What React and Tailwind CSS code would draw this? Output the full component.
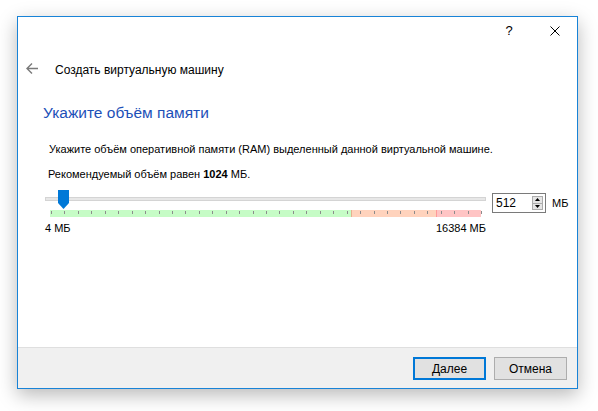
const font = { fontFamily: '"Liberation Sans", Arial, sans-serif' };

function Ticks() {
  const ticks = [];
  for (let i = 0; i <= 32; i++) {
    ticks.push(
      <div
        key={i}
        className="absolute top-[1px] h-[3px] w-px bg-[#8c8c8c]"
        style={{ left: `${Math.round(1 + i * 13.44)}px` }}
      />
    );
  }
  return ticks;
}

function Slider() {
  return (
    <div className="relative w-[441px] h-[27px]">
      <div className="mt-[7px] h-[4px] w-full bg-[#e7e7e7] border border-[#d4d4d4]" />
      <div className="relative mt-[9px] ml-[5px] flex h-[7px] w-[431px]">
        <div className="h-full w-[301px] bg-[#c6fcc6]" />
        <div className="h-full w-px bg-[#e6b090]" />
        <div className="h-full w-[84px] bg-[#ffd3bd]" />
        <div className="h-full w-px bg-[#ff9a9a]" />
        <div className="h-full flex-1 bg-[#ffc4c4]" />
        <Ticks />
      </div>
      <svg className="absolute left-[13px] top-0" width="11" height="19" viewBox="0 0 11 19">
        <path d="M0 0H11V13L5.5 19L0 13Z" fill="#0078d7" />
      </svg>
    </div>
  );
}

function SpinBox() {
  return (
    <div className="mt-[3px] flex h-[20px] w-[54px] items-center border border-[#7a7a7a] bg-white">
      <div className="flex-1 pl-[3px] text-[12px] leading-[16px] text-black">512</div>
      <div className="mr-[2px] flex h-[14px] w-[11px] flex-col border border-[#acacac] bg-[#e5e5e5]">
        <div className="flex flex-1 items-center justify-center border-b border-[#acacac]">
          <svg width="5" height="3" viewBox="0 0 5 3"><path d="M2.5 0L5 3H0Z" fill="#000" /></svg>
        </div>
        <div className="flex flex-1 items-center justify-center">
          <svg width="5" height="3" viewBox="0 0 5 3"><path d="M0 0H5L2.5 3Z" fill="#000" /></svg>
        </div>
      </div>
    </div>
  );
}

export default function App() {
  return (
    <div className="h-[411px] w-[598px] overflow-hidden bg-white pl-[17px] pt-[16px]" style={font}>
      <div className="flex h-[373px] w-[561px] flex-col border border-[#1883d7] bg-white shadow-[0_6px_18px_rgba(0,0,0,0.28)]">
        <div className="flex h-[28px] justify-end">
          <div className="flex w-[46px] items-center justify-center text-[13px] text-black">?</div>
          <div className="flex w-[45px] items-center justify-center">
            <svg width="10" height="10" viewBox="0 0 10 10">
              <path d="M0.5 0.5L9.5 9.5M9.5 0.5L0.5 9.5" stroke="#000" strokeWidth="1" />
            </svg>
          </div>
        </div>

        <div className="mt-[17px] flex h-[16px] items-center pl-[8px]">
          <svg width="12" height="16" viewBox="0 0 12 16">
            <path d="M1 6.5H12M6 1.5L1 6.5L6 11.5" stroke="#7a7a7a" strokeWidth="1.4" fill="none" />
          </svg>
          <div className="ml-[17px] text-[12px] leading-[16px] text-black">Создать виртуальную машину</div>
        </div>

        <div className="mt-[25px] pl-[25px] text-[15.5px] leading-[20px] text-[#1c50b8]">Укажите объём памяти</div>

        <div className="mt-[18px] pl-[31px] text-[11px] leading-[16px] text-black">
          Укажите объём оперативной памяти (RAM) выделенный данной виртуальной машине.
        </div>

        <div className="mt-[9px] pl-[30px] text-[11px] leading-[16px] text-black">
          Рекомендуемый объём равен <span className="font-bold">1024</span> МБ.
        </div>

        <div className="mt-[8px] flex items-start pl-[27px]">
          <Slider />
          <div className="ml-[6px]">
            <SpinBox />
          </div>
          <div className="ml-[6px] mt-[5px] text-[11px] leading-[16px] text-black">МБ</div>
        </div>

        <div className="mt-[3px] flex w-[468px] justify-between pl-[27px] text-[11px] leading-[16px] text-black">
          <span>4 МБ</span>
          <span>16384 МБ</span>
        </div>

        <div className="flex-1" />

        <div className="flex h-[41px] justify-end gap-[8px] border-t border-[#dfdfdf] bg-[#f0f0f0] pr-[10px] pt-[9px]">
          <button className="flex h-[23px] w-[73px] items-center justify-center border-2 border-[#0078d7] bg-[#e1e1e1] text-[12px] text-black">
            <span><span className="underline">Д</span>алее</span>
          </button>
          <button className="flex h-[23px] w-[73px] items-center justify-center border border-[#adadad] bg-[#e1e1e1] text-[12px] text-black">
            Отмена
          </button>
        </div>
      </div>
    </div>
  );
}
